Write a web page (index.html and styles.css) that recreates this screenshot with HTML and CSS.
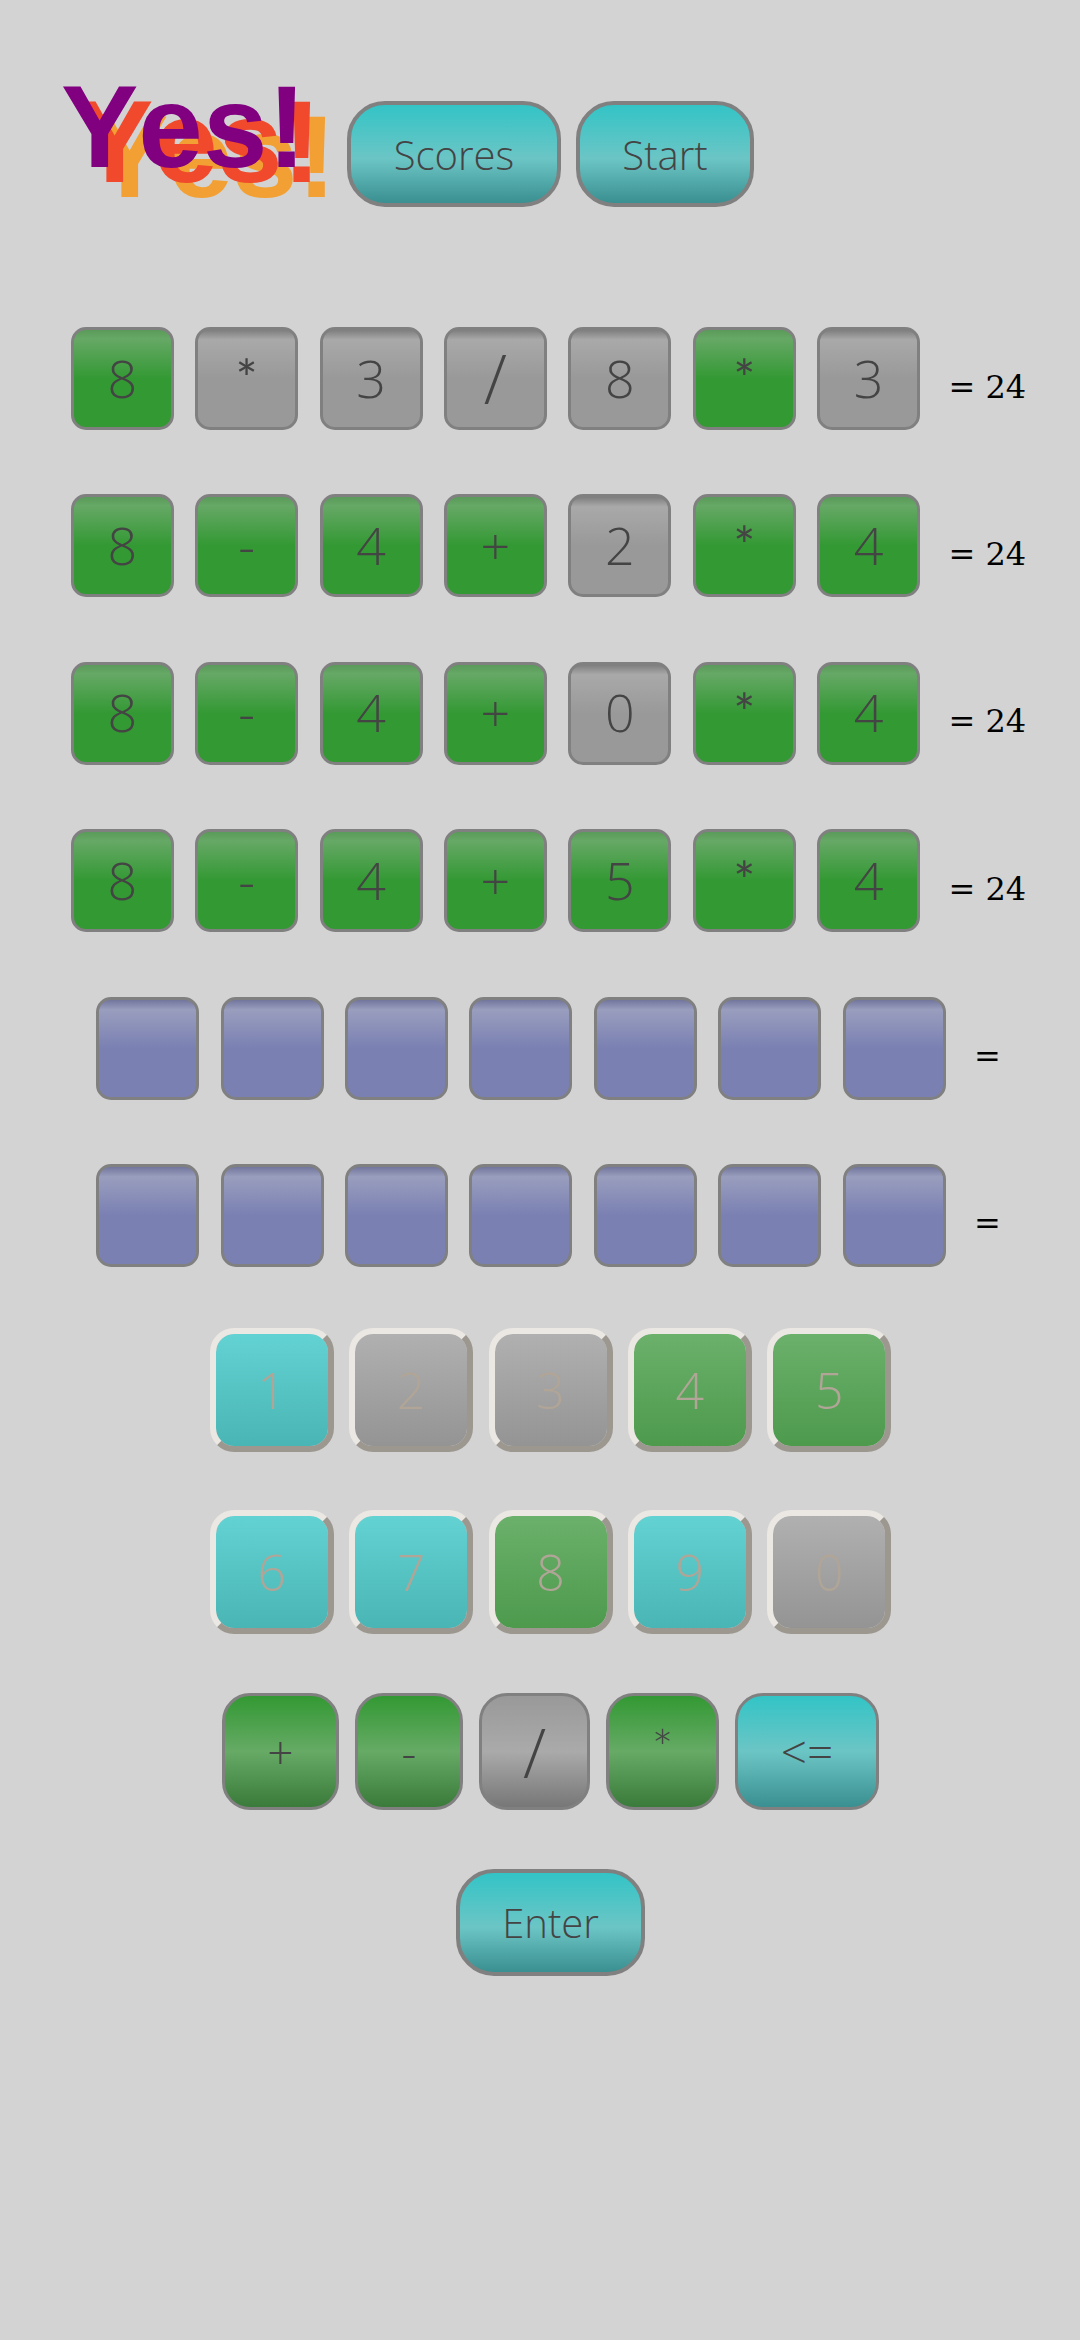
FILE: index.html
```html
<!DOCTYPE html>
<html lang="en">
<head>
<meta charset="utf-8">
<title>Yes!</title>
<link rel="stylesheet" href="styles.css">
</head>
<body>
<main class="page">
  <header class="header">
    <div class="logo">
      <span class="logo-layer logo-orange">Yes!</span>
      <span class="logo-layer logo-red">Yes!</span>
      <span class="logo-layer logo-purple">Yes!</span>
    </div>
    <button class="btn-main btn-scores">Scores</button>
    <button class="btn-main btn-start">Start</button>
  </header>

  <section class="board">
    <div class="row">
      <div class="cell green">8</div><div class="cell grey star">*</div><div class="cell grey">3</div><div class="cell grey slash">/</div><div class="cell grey">8</div><div class="cell green star">*</div><div class="cell grey">3</div>
      <span class="result">= 24</span>
    </div>
    <div class="row">
      <div class="cell green">8</div><div class="cell green">-</div><div class="cell green">4</div><div class="cell green">+</div><div class="cell grey">2</div><div class="cell green star">*</div><div class="cell green">4</div>
      <span class="result">= 24</span>
    </div>
    <div class="row">
      <div class="cell green">8</div><div class="cell green">-</div><div class="cell green">4</div><div class="cell green">+</div><div class="cell grey">0</div><div class="cell green star">*</div><div class="cell green">4</div>
      <span class="result">= 24</span>
    </div>
    <div class="row">
      <div class="cell green">8</div><div class="cell green">-</div><div class="cell green">4</div><div class="cell green">+</div><div class="cell green">5</div><div class="cell green star">*</div><div class="cell green">4</div>
      <span class="result">= 24</span>
    </div>
    <div class="row">
      <div class="cell blue">&nbsp;</div><div class="cell blue">&nbsp;</div><div class="cell blue">&nbsp;</div><div class="cell blue">&nbsp;</div><div class="cell blue">&nbsp;</div><div class="cell blue">&nbsp;</div><div class="cell blue">&nbsp;</div>
      <span class="result">=</span>
    </div>
    <div class="row">
      <div class="cell blue">&nbsp;</div><div class="cell blue">&nbsp;</div><div class="cell blue">&nbsp;</div><div class="cell blue">&nbsp;</div><div class="cell blue">&nbsp;</div><div class="cell blue">&nbsp;</div><div class="cell blue">&nbsp;</div>
      <span class="result">=</span>
    </div>
  </section>

  <section class="digits">
    <div class="digit-row">
      <button class="digit k-teal">1</button><button class="digit k-grey">2</button><button class="digit k-grey">3</button><button class="digit k-green">4</button><button class="digit k-green">5</button>
    </div>
    <div class="digit-row">
      <button class="digit k-teal">6</button><button class="digit k-teal">7</button><button class="digit k-green">8</button><button class="digit k-teal">9</button><button class="digit k-grey">0</button>
    </div>
  </section>

  <section class="ops">
    <button class="op op-plus o-green">+</button>
    <button class="op op-minus o-green">-</button>
    <button class="op op-slash o-grey slash">/</button>
    <button class="op op-star o-green star">*</button>
    <button class="op op-back o-teal">&lt;=</button>
  </section>

  <div class="enter-row">
    <button class="btn-main btn-enter">Enter</button>
  </div>
</main>
</body>
</html>
```
FILE: styles.css
```css
* { box-sizing: border-box; }
html, body { margin: 0; padding: 0; }
body {
  width: 1080px;
  height: 2340px;
  background: #d3d3d3;
  overflow: hidden;
  font-family: "Open Sans", "Lato", sans-serif;
  font-weight: 300;
  color: #444;
}
button {
  font: inherit;
  color: inherit;
  padding: 0;
  margin: 0;
  cursor: pointer;
}
.page { display: flex; flex-direction: column; }

/* header */
.header {
  display: flex;
  align-items: flex-start;
  padding: 101px 0 0 61px;
  height: 327px;
}
.logo { position: relative; width: 286px; height: 106px; }
.logo-layer {
  position: absolute;
  font-family: "Liberation Sans", Arial, sans-serif;
  font-weight: 700;
  font-size: 116px;
  line-height: 116px;
  white-space: nowrap;
  font-kerning: none;
}
.logo-purple { left: 0; top: -32px; color: #800080; }
.logo-red { left: 15px; top: -17px; color: #f0492b; }
.logo-orange { left: 30px; top: -2px; color: #f2a033; }

.btn-main {
  height: 106px;
  border: 4px solid #808080;
  border-radius: 38px;
  font-size: 40px;
  color: #444;
  background: linear-gradient(#33c4c6 0%, #6cc5c5 55%, #3a8f90 100%);
}
.btn-scores { width: 214px; }
.btn-start { width: 178px; margin-left: 15px; }

/* board */
.board {
  display: flex;
  flex-direction: column;
  gap: 64.4px;
  padding-left: 17px;
}
.row {
  display: flex;
  justify-content: center;
  align-items: baseline;
  height: 103px;
  gap: 21.4px;
}
.cell {
  width: 103px;
  height: 103px;
  border: 3px solid #808080;
  border-radius: 15px;
  display: flex;
  align-items: center;
  justify-content: center;
  padding-bottom: 2px;
  font-size: 52px;
  line-height: 1;
}
.cell.star { font-family: "Lato", sans-serif; font-weight: 400; }
.cell.slash { font-size: 68px; align-self: flex-start; }
.green { background: linear-gradient(#5a9a5a 0%, #66a866 9%, #339933 50%, #339933 100%); }
.grey { background: linear-gradient(#7e7e7e 0%, #a9a9a9 10%, #999 50%, #999 100%); }
.blue { background: linear-gradient(#72769d 0%, #999ebe 10%, #7a80b2 50%, #7a80b2 100%); }
.result {
  font-family: "DejaVu Serif", serif;
  font-weight: 400;
  font-size: 32px;
  color: #000;
  margin-left: 7px;
}

/* digit keypad */
.digits {
  display: flex;
  flex-direction: column;
  gap: 58px;
  padding-left: 21px;
  margin-top: 61px;
}
.digit-row { display: flex; justify-content: center; gap: 15.4px; }
.digit {
  width: 124px;
  height: 124px;
  border-width: 6px;
  border-style: solid;
  border-color: #ebe7e3 #9c9890 #9c9890 #ebe7e3;
  border-radius: 24px;
  font-size: 50px;
  color: #b0a597;
}
.k-teal { background: linear-gradient(#63d2d2, #4ab5b5) padding-box; }
.k-grey { background: linear-gradient(#b0b0b0, #949494) padding-box; }
.k-green { background: linear-gradient(#6bb06b, #4d9a4d) padding-box; }

/* operators */
.ops {
  display: flex;
  justify-content: center;
  gap: 16px;
  padding-left: 21px;
  margin-top: 59px;
}
.op {
  height: 117px;
  border: 3px solid #808080;
  border-radius: 28px;
  font-size: 46px;
}
.op.slash { font-size: 68px; }
.op.star { font-family: "Lato", sans-serif; font-size: 52px; padding-bottom: 8px; }
.op-plus { width: 117px; }
.op-minus { width: 108px; }
.op-slash { width: 111px; }
.op-star { width: 113px; }
.op-back { width: 144px; }
.o-green { background: linear-gradient(#339933 0%, #66aa66 50%, #3a7a3a 100%); }
.o-grey { background: linear-gradient(#999 0%, #aaa 50%, #777 100%); }
.o-teal { background: linear-gradient(#33c4c6 0%, #6cc5c5 50%, #3a8f90 100%); }

.enter-row {
  display: flex;
  justify-content: center;
  padding-left: 21px;
  margin-top: 59px;
}
.btn-enter { width: 189px; height: 107px; }
```
